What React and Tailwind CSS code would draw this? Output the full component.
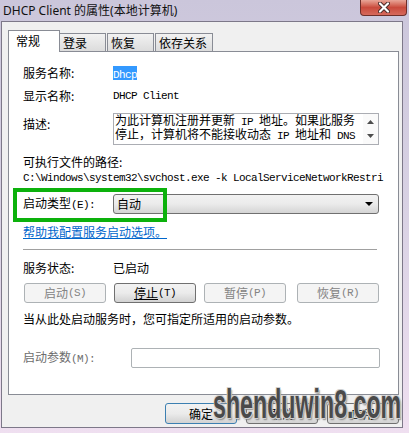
import React from 'react';

// Latin text in the dialog is half-width (SimSun style), so it goes through a mono span
const M = ({ children }) => (
  <span className="font-[family-name:Liberation_Mono,monospace] text-[11px] tracking-[-0.6px]">{children}</span>
);

const Label = ({ children, gray }) => (
  <div className={`w-[90px] shrink-0 ${gray ? 'text-[#6d6d6d]' : ''}`}>{children}</div>
);

const WinButton = ({ children, disabled, className = '' }) => (
  <div
    className={`h-[20px] w-[82px] flex items-center justify-center rounded-[3px] border ${
      disabled
        ? 'border-[#adb2b5] bg-[#f4f4f4] text-[#838383]'
        : 'border-[#707070] bg-linear-to-b from-[#f2f2f2] via-[#ebebeb] to-[#d2d2d2] text-black'
    } ${className}`}
  >
    {children}
  </div>
);

const Tab = ({ children, active, className = '' }) =>
  active ? (
    <div className={`h-[22px] w-[52px] border border-b-0 border-[#898c95] bg-white pl-[7px] pt-[3px] leading-[14px] ${className}`}>
      {children}
    </div>
  ) : (
    <div className={`h-[18px] mb-px border border-b-0 border-[#898c95] bg-linear-to-b from-[#f2f2f2] to-[#dcdcdc] pl-[3px] pt-[2px] leading-[14px] ${className}`}>
      {children}
    </div>
  );

export default function App() {
  return (
    <div className="relative w-[409px] h-[433px] overflow-hidden bg-linear-to-b from-[#cbc6db] via-[#d9d2e4] to-[#efdff0] font-[family-name:Noto_Sans_CJK_SC,sans-serif] text-[12px] text-black">
      {/* title bar */}
      <div className="h-[21px] pl-[3px] leading-[22px] font-[family-name:Noto_Sans,Noto_Sans_CJK_SC,sans-serif] text-[12px] text-[#111]">
        DHCP Client 的属性(本地计算机)
      </div>
      <div className="absolute top-0 right-[2px] w-[47px] h-[16px] rounded-b-[4px] border border-t-0 border-[#6e2f2a] bg-linear-to-b from-[#e8a598] via-[#c94a3c] to-[#d6695c] flex items-center justify-center">
        <svg width="12" height="11" viewBox="0 0 12 11">
          <path d="M2 1.5 L10 9.5 M10 1.5 L2 9.5" stroke="#4a2a28" strokeWidth="4" strokeLinecap="round" />
          <path d="M2 1.5 L10 9.5 M10 1.5 L2 9.5" stroke="#ffffff" strokeWidth="2.2" strokeLinecap="round" />
        </svg>
      </div>

      {/* dialog body */}
      <div className="ml-[1px] w-[402px] h-[407px] border border-[#7d7889] bg-[#f0f0f0] pl-[6px] pt-[8px]">
        <div className="relative z-10 flex items-end h-[22px]">
          <Tab active>常规</Tab>
          <Tab className="w-[47px] -ml-px">登录</Tab>
          <Tab className="w-[47px] ml-px">恢复</Tab>
          <Tab className="w-[58px] ml-px">依存关系</Tab>
        </div>

        <div className="-mt-px w-[391px] h-[344px] border border-[#898c95] bg-white pl-[14px] pt-[14px] leading-[14px]">
          <div className="flex items-center h-[14px]">
            <Label>服务名称:</Label>
            <span className="bg-[#3399ff] text-white h-[14px] leading-[14px]">
              <M>Dhcp</M>
            </span>
          </div>

          <div className="flex items-center h-[14px] mt-[9px]">
            <Label>显示名称:</Label>
            <M>DHCP Client</M>
          </div>

          <div className="flex mt-[10px]">
            <Label>
              <div className="pt-[4px]">描述:</div>
            </Label>
            <div className="flex w-[266px] h-[32px] border border-[#abadb3] bg-white">
              <div className="flex-1 pl-px leading-[12px] text-[12px] whitespace-nowrap">
                <div>为此计算机注册并更新<M> IP </M>地址。如果此服务</div>
                <div>停止，计算机将不能接收动态<M> IP </M>地址和<M> DNS</M></div>
              </div>
              <div className="w-[15px] flex flex-col items-center justify-between py-[6px] bg-[#fafafa]">
                <svg width="7" height="4" viewBox="0 0 7 4"><path d="M3.5 0 L7 4 L0 4 Z" fill="#4d4d4d" /></svg>
                <svg width="7" height="4" viewBox="0 0 7 4"><path d="M0 0 L7 0 L3.5 4 Z" fill="#4d4d4d" /></svg>
              </div>
            </div>
          </div>

          <div className="h-[14px] mt-[10px] flex items-center">可执行文件的路径:</div>
          <div className="h-[14px] mt-[2px] flex items-center whitespace-nowrap overflow-hidden w-[362px]">
            <M>C:\Windows\system32\svchost.exe -k LocalServiceNetworkRestri</M>
          </div>

          <div className="relative flex items-center h-[20px] mt-[9px]">
            <div className="absolute -left-[10px] -top-[6px] w-[154px] h-[34px] border-[4px] border-[#0cb10c] z-10" />
            <Label>
              启动类型<M>(E):</M>
            </Label>
            <div className="w-[266px] h-[20px] rounded-[3px] border border-[#707070] bg-linear-to-b from-[#f2f2f2] via-[#ebebeb] to-[#d4d4d4] flex items-center justify-between pl-[3px] pr-[5px]">
              <span className="text-[12px]">自动</span>
              <svg width="8" height="4" viewBox="0 0 8 4"><path d="M0 0 L8 0 L4 4 Z" fill="#000" /></svg>
            </div>
          </div>

          <div className="h-[14px] mt-[11px] flex items-center">
            <span className="text-[#0066cc] underline">帮助我配置服务启动选项。</span>
          </div>

          <div className="mt-[10px] w-[354px] h-px bg-[#a0a0a0]" />

          <div className="flex items-center h-[14px] mt-[11px]">
            <Label>服务状态:</Label>
            <span>已启动</span>
          </div>

          <div className="flex h-[20px] mt-[8px] ml-px">
            <WinButton disabled>
              启动<M>(S)</M>
            </WinButton>
            <WinButton className="ml-[8px]">
              <span className="underline">停止</span>
              <M>(T)</M>
            </WinButton>
            <WinButton disabled className="ml-[8px]">
              暂停<M>(P)</M>
            </WinButton>
            <WinButton disabled className="ml-[11px]">
              恢复<M>(R)</M>
            </WinButton>
          </div>

          <div className="h-[14px] mt-[9px] flex items-center">当从此处启动服务时，您可指定所适用的启动参数。</div>

          <div className="flex items-center h-[20px] mt-[22px]">
            <div className="w-[108px] shrink-0 text-[#6d6d6d]">
              启动参数<M>(M):</M>
            </div>
            <div className="w-[249px] h-[20px] rounded-[2px] border border-[#adb2b5] bg-white" />
          </div>
        </div>

        <div className="flex gap-[9px] mt-[8px] ml-[157px]">
          <div className="w-[72px] h-[21px] rounded-[3px] border border-[#3c7fb1] bg-linear-to-b from-[#f2f2f2] via-[#ebebeb] to-[#d2d2d2] flex items-center justify-center">
            确定
          </div>
          <div className="w-[72px] h-[21px] rounded-[3px] border border-[#707070] bg-linear-to-b from-[#f2f2f2] via-[#ebebeb] to-[#d2d2d2] flex items-center justify-center">
            取消
          </div>
          <div className="w-[72px] h-[21px] rounded-[3px] border border-[#707070] bg-linear-to-b from-[#f2f2f2] via-[#ebebeb] to-[#d2d2d2] flex items-center justify-center">
            应用
          </div>
        </div>
      </div>

      {/* site watermark */}
      <div className="absolute left-[213px] top-[381px] origin-left scale-x-[0.58] whitespace-nowrap font-[family-name:Liberation_Sans,sans-serif] font-bold text-[40px] leading-[46px] text-[#4a4a4a] [text-shadow:1px_1px_0_#d0d0d0,-1px_-1px_0_#d0d0d0,1px_-1px_0_#d0d0d0,-1px_1px_0_#d0d0d0,2px_2px_2px_#888]">
        shenduwin8.com
      </div>
    </div>
  );
}
